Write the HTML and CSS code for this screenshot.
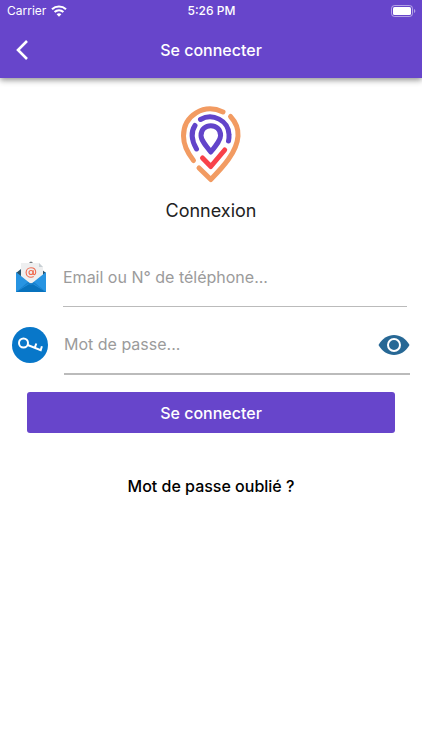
FILE: index.html
```html
<!DOCTYPE html>
<html lang="fr">
<head>
<meta charset="utf-8">
<meta name="viewport" content="width=device-width, initial-scale=1">
<title>Se connecter</title>
<link rel="stylesheet" href="styles.css">
</head>
<body>
<header class="header">
  <div class="status">
    <div class="carrier">
      <span>Carrier</span>
      <svg width="16" height="12" viewBox="0 0 16 12" fill="none" stroke="#fff" stroke-width="2.1" aria-hidden="true">
        <path d="M1 4.3C4.9.6 11.1.6 15 4.3M3.600 7.1c2.500-2.300 6.300-2.300 8.800 0"/>
        <path d="M5.600 9.200c1.400-1.200 3.400-1.200 4.800 0L8 11.700z" fill="#fff" stroke="none"/>
      </svg>
    </div>
    <span class="time">5:26 PM</span>
    <svg class="battery" width="25" height="12" viewBox="0 0 25 12" aria-hidden="true">
      <rect x=".5" y=".5" width="21" height="11" rx="3" fill="none" stroke="#fff" stroke-opacity=".5"/>
      <rect x="2" y="2" width="18" height="8" rx="1.5" fill="#fff"/>
      <path d="M23 4v4c1.8-.7 1.8-3.3 0-4z" fill="#fff" fill-opacity=".5"/>
    </svg>
  </div>
  <div class="navbar">
    <button class="back" type="button" aria-label="Retour">
      <svg width="12" height="20" viewBox="0 0 12 20" fill="none" stroke="#fff" stroke-width="2.6"><path d="M11 1 2 10l9 9"/></svg>
    </button>
    <h1 class="title">Se connecter</h1>
  </div>
</header>
<main class="content">
  <svg class="logo" width="84" height="92" viewBox="0 0 84 92" fill="none" stroke-width="5" stroke-linecap="round" stroke-linejoin="round" aria-hidden="true">
    <g stroke="#f29b62">
      <path d="M54 14C35 5 14.500 17.500 14.500 38C14.500 47 19 55.500 24.500 62.500"/>
      <path d="M61.500 18.500C67.500 25 69.500 31 69 38C68 54 54 69 41.800 81.500L30 70"/>
    </g>
    <g stroke="#6244ca">
      <path d="M31.500 21.500C43.500 14.500 59.500 22.500 60 36.500Q60.200 39.500 59.500 43"/>
      <path d="M26 27.500C22 33.500 22 41.500 27.500 51"/>
      <path d="M41.800 54C36.500 47.500 32 42 32 37.500C32 24.500 51.600 24.500 51.600 37.500C51.600 42 47 47.500 41.800 54Z"/>
    </g>
    <path stroke="#f84249" d="m33.500 60 8.300 8.500L55.700 52"/>
  </svg>
  <h2 class="heading">Connexion</h2>
  <form class="form">
    <div class="row">
      <label class="icon" for="email" aria-label="Email ou numéro de téléphone">
        <svg width="32" height="32" viewBox="0 0 32 32">
          <path d="M1 12 6 8h20l5 4v6H1z" fill="#29536b"/>
          <path d="M14 2q2-3 4 0" fill="#747b80"/>
          <path d="M6 2h18l4 4v17H6z" fill="#eeeff0"/>
          <path d="M24 2v4h4z" fill="#c8cfd4"/>
          <path d="m1 11 15 12 15-12v20H1z" fill="#2794e2"/>
          <path d="m1 31 15-9 15 9z" fill="#0872bd"/>
          <path d="m1 31 12-10 3 2 3-2 12 10-12-8-3 1-3-1z" fill="#1881ce"/>
          <g fill="none" stroke="#ef6b50" stroke-width="1.100"><circle cx="16" cy="11.500" r="2"/><path d="M18.200 9.200v3.600c.6 1.700 2.500.7 2.500-1.500 0-2.700-2-4.600-4.700-4.600-2.800 0-4.900 2-4.900 4.800s2.100 4.800 4.900 4.800q1.400 0 2.700-.7"/></g>
        </svg>
      </label>
      <input class="field" id="email" type="text" placeholder="Email ou N° de téléphone...">
    </div>
    <div class="row password">
      <label class="icon" for="password" aria-label="Mot de passe">
        <svg width="36" height="36" viewBox="0 0 36 36" fill="none" stroke="#fff" stroke-width="2">
          <circle cx="18" cy="18" r="18" fill="#0877c9" stroke="none"/>
          <circle cx="11.500" cy="16" r="4.500"/>
          <path d="m15.700 18 13 5.200 1.200-4M22.800 20.700l1.500-4.200"/>
        </svg>
      </label>
      <input class="field" id="password" type="password" placeholder="Mot de passe...">
      <button class="reveal" type="button" aria-label="Afficher le mot de passe">
        <svg width="32" height="22" viewBox="0 0 32 22"><path d="M.5 11C4 4.500 10 1 16 1s12 3.500 15.500 10C28 17.500 22 21 16 21S4 17.500.5 11z" fill="#276895"/><circle cx="16" cy="11" r="6" fill="none" stroke="#fff" stroke-width="2"/></svg>
      </button>
    </div>
    <button class="submit" type="submit">Se connecter</button>
  </form>
  <a class="forgot" href="#">Mot de passe oublié ?</a>
</main>
</body>
</html>
```
FILE: styles.css
```css
* {
  box-sizing: border-box;
}

body {
  margin: 0;
  min-height: 100vh;
  background: #fff;
  color: #222;
  font-family: Inter, "Liberation Sans", sans-serif;
  font-size: 16px;
  line-height: 20px;
}

button {
  padding: 0;
  border: 0;
  background: none;
  color: inherit;
  font: inherit;
}

svg {
  display: block;
}

.header {
  background: #6745cb;
  color: #fff;
  box-shadow: 0 2px 6px rgba(0, 0, 0, 0.45);
}

.status {
  display: grid;
  grid-template-columns: 1fr auto 1fr;
  align-items: center;
  height: 22px;
  padding: 0 6px 0 7px;
  font-size: 12px;
}

.carrier {
  display: flex;
  align-items: center;
  gap: 5px;
}

.time {
  font-weight: 500;
}

.battery {
  justify-self: end;
}

.navbar {
  display: grid;
  grid-template-columns: 40px 1fr 40px;
  align-items: center;
  height: 56px;
}

.back {
  display: flex;
  justify-content: flex-end;
  padding: 8px 12px;
}

.title {
  margin: 0;
  font-size: 16px;
  font-weight: 500;
  text-align: center;
}

.content {
  display: flex;
  flex-direction: column;
  align-items: center;
  padding-top: 20px;
}

.heading {
  margin: 9px 0 0;
  color: #222;
  font-size: 18px;
  font-weight: 400;
  line-height: 24px;
}

.form {
  width: 100%;
  padding-top: 24px;
}

.row {
  display: flex;
  align-items: center;
  margin: 0 15px;
  gap: 16px;
  height: 60px;
}

.password {
  position: relative;
  margin: 8px 12px 0;
}

.icon {
  flex: none;
}

.field {
  flex: 1;
  min-width: 0;
  height: 60px;
  padding: 0;
  border: 0;
  border-bottom: 1px solid #bbb;
  border-radius: 0;
  background: none;
  color: #222;
  font: inherit;
  outline: 0;
}

.password .field {
  border-bottom-width: 2px;
  padding-right: 40px;
}

.field::placeholder {
  color: #9b9b9b;
  opacity: 1;
}

.reveal {
  position: absolute;
  right: 0;
}

.submit {
  display: block;
  width: calc(100% - 54px);
  height: 41px;
  margin: 17px auto 0;
  border-radius: 3px;
  background: #6745cb;
  color: #fff;
  font-size: 16px;
  font-weight: 500;
}

.forgot {
  margin-top: 43px;
  color: #000;
  font-weight: 500;
  text-decoration: none;
}
```
